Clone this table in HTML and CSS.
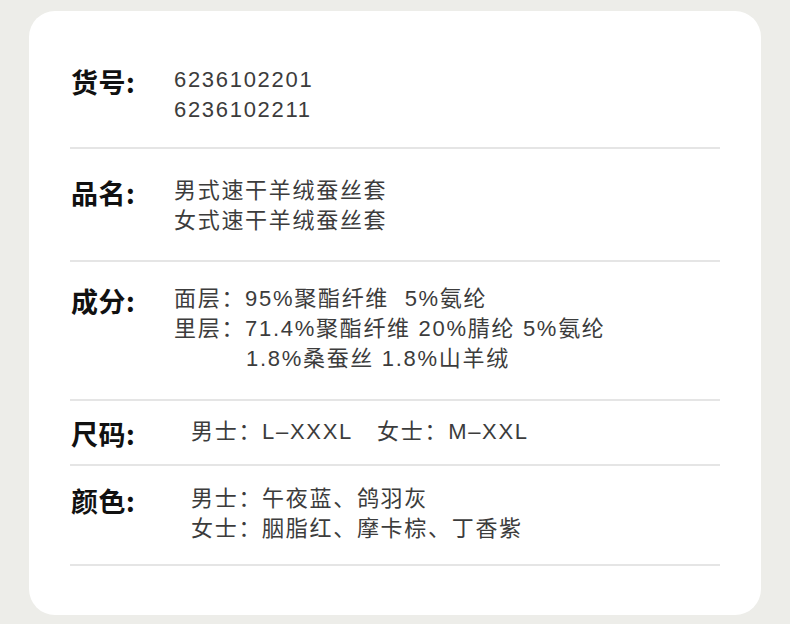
FILE: index.html
```html
<!DOCTYPE html>
<html lang="zh-CN">
<head>
<meta charset="utf-8">
<link rel="stylesheet" href="styles.css">
</head>
<body>
<div class="card">
  <div class="row row-1">
    <div class="label">货号:</div>
    <div class="value">
      <div>6236102201</div>
      <div>6236102211</div>
    </div>
  </div>
  <div class="row row-2">
    <div class="label">品名:</div>
    <div class="value">
      <div>男式速干羊绒蚕丝套</div>
      <div>女式速干羊绒蚕丝套</div>
    </div>
  </div>
  <div class="row row-3">
    <div class="label">成分:</div>
    <div class="value">
      <div>面层：95%聚酯纤维&nbsp;&nbsp;5%氨纶</div>
      <div>里层：71.4%聚酯纤维 20%腈纶 5%氨纶</div>
      <div class="indent">1.8%桑蚕丝 1.8%山羊绒</div>
    </div>
  </div>
  <div class="row row-4">
    <div class="label">尺码:</div>
    <div class="value shift">
      <div>男士：L–XXXL<span class="gap"></span>女士：M–XXL</div>
    </div>
  </div>
  <div class="row row-5">
    <div class="label">颜色:</div>
    <div class="value shift">
      <div>男士：午夜蓝、鸽羽灰</div>
      <div>女士：胭脂红、摩卡棕、丁香紫</div>
    </div>
  </div>
</div>
</body>
</html>
```
FILE: styles.css
```css
html, body {
  margin: 0;
  padding: 0;
  background: #edede9;
}
body {
  padding: 11px 29px 9px;
}
.card {
  background: #ffffff;
  border-radius: 26px;
  height: 604px;
  padding: 0 41px;
  box-sizing: border-box;
  overflow: hidden;
}
.row {
  display: flex;
  align-items: flex-start;
  border-bottom: 2px solid #e5e5e5;
}
.label {
  flex: none;
  width: 104px;
  padding-left: 1px;
  box-sizing: border-box;
  font-family: "Noto Sans CJK SC", sans-serif;
  font-weight: 700;
  font-size: 27px;
  line-height: 30px;
  height: 30px;
  letter-spacing: 0.5px;
  color: #111111;
  margin-top: 2px;
  margin-bottom: -2px;
}
.value {
  font-family: "Liberation Sans", "Noto Sans CJK SC", sans-serif;
  font-size: 22px;
  line-height: 30px;
  letter-spacing: 1.7px;
  color: #3c3c3c;
  white-space: nowrap;
}
.value.shift {
  padding-left: 17px;
}
.indent {
  padding-left: 72px;
}
.gap {
  display: inline-block;
  width: 24px;
}
.row-1 { padding: 54px 0 22px; }
.row-2 { padding: 27px 0 24px; }
.row-3 { padding: 22px 0 25px; }
.row-4 { padding: 16px 0 17px; }
.row-5 { padding: 18px 0 20px; }
```
